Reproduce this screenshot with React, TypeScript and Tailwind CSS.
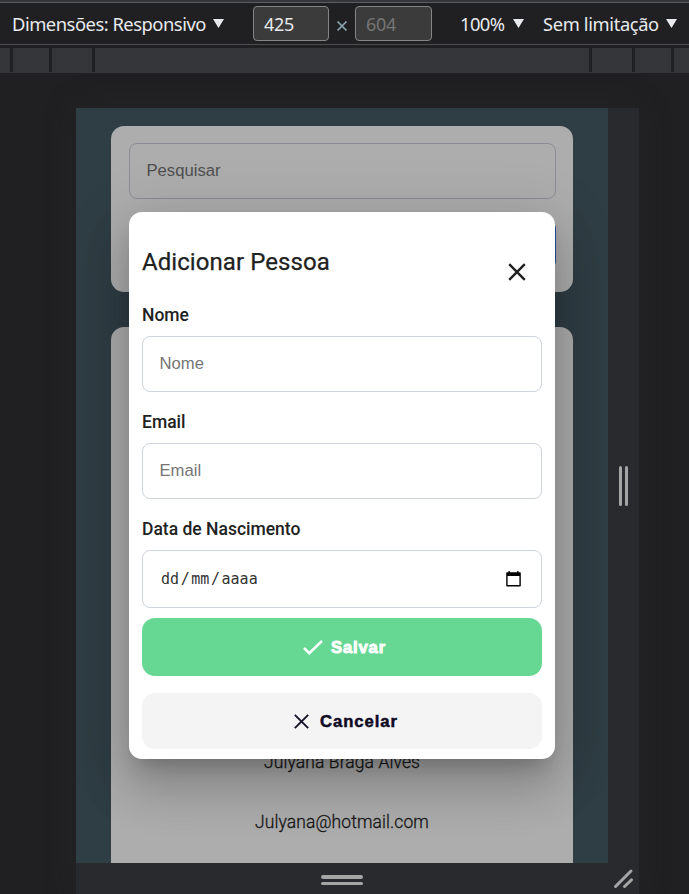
import type { ReactNode } from "react";

function Caret() {
  return (
    <svg className="-mt-px h-[9px] w-[11px] shrink-0" viewBox="0 0 11 9">
      <path d="M0 0h11L5.500 9z" fill="#e8eaed" />
    </svg>
  );
}

function Toolbar() {
  return (
    <>
      <div className="h-[3px] border-b border-[#5c5d60] bg-[#35363a]" />
      <header className="flex h-[42px] items-center border-b border-[#4c4d51] pl-3 text-[18px] whitespace-nowrap text-[#e8eaed]">
        <span className="w-[201px] shrink-0 text-[18.4px] tracking-[-0.5px]">Dimensões: Responsivo</span>
        <Caret />
        <div className="ml-[29px] flex h-[35px] w-[76px] shrink-0 items-center rounded-[4px] border border-[#858585] bg-[#3b3b3b] pt-[2px] pl-[10px] tracking-[-0.3px]">425</div>
        <svg className="mx-[7px] mt-[5px] h-3 w-3 shrink-0" viewBox="0 0 12 12">
          <path d="M1.500 1.500l9 9M10.500 1.500l-9 9" stroke="#8ca5b1" strokeWidth="1.700" />
        </svg>
        <div className="flex h-[35px] w-[77px] shrink-0 items-center rounded-[4px] border border-[#858585] bg-[#3b3b3b] pt-[2px] pl-[10px] tracking-[-0.3px] text-[#757575]">604</div>
        <span className="ml-7 w-[53px] shrink-0 text-[18.4px] tracking-[-0.6px]">100%</span>
        <Caret />
        <span className="ml-[19px] w-[123px] shrink-0 text-[18.3px] tracking-[-0.35px]">Sem limitação</span>
        <Caret />
      </header>
    </>
  );
}

function Ruler() {
  return (
    <div className="mt-[3px] flex h-[25px] gap-[3px] border-b border-[#35363a]">
      <i className="w-[10px] bg-[#35363a]" />
      <i className="w-[36px] bg-[#35363a]" />
      <i className="w-[40px] bg-[#35363a]" />
      <i className="w-[494px] bg-[#35363a]" />
      <i className="w-[40px] bg-[#35363a]" />
      <i className="w-[36px] bg-[#35363a]" />
      <i className="flex-1 bg-[#35363a]" />
    </div>
  );
}

function Field({ label, children }: { label: string; children: ReactNode }) {
  return (
    <label className="block">
      <span className="block h-[31px] text-[17.5px] leading-[20px] font-medium text-[#212121]">{label}</span>
      {children}
    </label>
  );
}

function Dialog() {
  return (
    <section className="absolute top-[104px] left-[53px] h-[547px] w-[426px] rounded-[13px] bg-white px-[13px] shadow-[0_14px_19px_-9px_rgba(0,0,0,0.2),0_30px_48px_4px_rgba(0,0,0,0.14),0_11px_58px_10px_rgba(0,0,0,0.12)]">
      <div className="flex h-[93px] justify-between pt-[34px] pr-[16px]">
        <h1 className="text-[24px] leading-8 tracking-[0.07px] text-[#212121] [-webkit-text-stroke:0.25px_#212121]">Adicionar Pessoa</h1>
        <svg className="mt-[17px] h-[18px] w-[18px]" viewBox="0 0 18 18">
          <path d="M1.200 1.200l15.600 15.600M16.800 1.200L1.200 16.800" stroke="#202020" strokeWidth="2.400" />
        </svg>
      </div>
      <Field label="Nome">
        <input placeholder="Nome" className="mb-5 block h-[56px] w-full rounded-[8px] border border-[#ced4da] px-[16.500px] font-['Liberation_Sans',sans-serif] text-[16.67px] placeholder:text-[#757575]" />
      </Field>
      <Field label="Email">
        <input placeholder="Email" className="mb-5 block h-[56px] w-full rounded-[8px] border border-[#ced4da] px-[16.500px] font-['Liberation_Sans',sans-serif] text-[16.67px] placeholder:text-[#757575]" />
      </Field>
      <Field label="Data de Nascimento">
        <div className="flex h-[58px] items-center justify-between rounded-[8px] border border-[#ced4da] pr-[20px] pl-[18px] font-['DejaVu_Sans_Mono',monospace] text-[15px] text-[#333]">
          <span className="flex items-center">
            <span>dd</span><span className="mx-[1.600px]">/</span><span>mm</span><span className="mx-[1.600px]">/</span><span>aaaa</span>
          </span>
          <svg className="h-[16px] w-[15px]" viewBox="0 0 15 16">
            <path d="M2.500 0h1.300v1.200h7.400V0h1.300v1.200H14q.8 0 .8.800v12.700q0 .8-.8.800H1q-.8 0-.8-.8V2q0-.8.8-.8h1.500zM1.600 5v9.100h11.800V5z" fill="#000" fillRule="evenodd" />
          </svg>
        </div>
      </Field>
      <button className="mt-[10px] flex h-[58px] w-full items-center justify-center gap-[8px] rounded-[13px] bg-[#66d893] pl-[5px] font-['Liberation_Sans',sans-serif] text-[16.67px] font-bold tracking-[0.85px] text-white [-webkit-text-stroke:0.9px_white]">
        <svg className="h-[15px] w-[20px]" viewBox="0 0 20 15">
          <path d="M1 8l5.300 5.200L19 1" fill="none" stroke="white" strokeWidth="2.500" />
        </svg>
        Salvar
      </button>
      <button className="mt-[17px] flex h-[56px] w-full items-center justify-center gap-[11px] rounded-[13px] bg-[#f4f4f4] pl-[8px] font-['Liberation_Sans',sans-serif] text-[16.67px] font-bold tracking-[0.95px] text-[#0f0a24] [-webkit-text-stroke:0.5px_#0f0a24]">
        <svg className="h-[15px] w-[15px]" viewBox="0 0 15 15">
          <path d="M.8.8l13.400 13.400M14.200.8L.8 14.200" stroke="#171229" strokeWidth="1.900" />
        </svg>
        Cancelar
      </button>
    </section>
  );
}

export default function App() {
  return (
    <main className="h-[894px] w-[689px] overflow-hidden bg-[#202022] font-['Noto_Sans',sans-serif]">
      <Toolbar />
      <Ruler />
      <div className="mt-[35px] ml-[76px] grid h-[786px] w-[563px] grid-cols-[532px_31px] grid-rows-[755px_31px] bg-[#292a2d] shadow-[0_0_30px_rgba(45,45,48,0.3)]">
        <div className="relative overflow-hidden bg-[#2f3d44] px-[35px] pt-[18px] font-[Roboto,sans-serif]">
          <div className="h-[166px] rounded-[13px] bg-[#adadad] pt-[17px] pr-[17px] pl-[18px]">
            <div className="flex h-[56px] items-center rounded-[8px] border border-[#8c8d94] px-[16.500px] pb-[2px] font-['Liberation_Sans',sans-serif] text-[16.67px] text-[#4f4f4f]">Pesquisar</div>
            <div className="mt-[22px] h-[48px] rounded-[8px] bg-[#244e9b]" />
          </div>
          <div className="mt-[35px] h-[600px] rounded-t-[13px] bg-[#adadad] px-[18px] pt-[420px] text-center text-[17.5px] font-light tracking-[0.1px] text-[#171717] [-webkit-text-stroke:0.3px_#171717]">
            <p className="leading-[30px]">Julyana Braga Alves</p>
            <p className="mt-[30px] leading-[30px]">Julyana@hotmail.com</p>
          </div>
          <Dialog />
        </div>
        <div className="flex items-center justify-center gap-[3px]">
          <i className="h-[40px] w-[3px] rounded-full bg-[#a5a5a5]" />
          <i className="h-[40px] w-[3px] rounded-full bg-[#a5a5a5]" />
        </div>
        <div className="flex flex-col items-center justify-center gap-[3px] pt-[3px]">
          <i className="h-[4px] w-[42px] rounded-full bg-[#a5a5a5]" />
          <i className="h-[3px] w-[42px] rounded-full bg-[#a5a5a5]" />
        </div>
        <svg className="h-[31px] w-[31px]" viewBox="0 0 31 31">
          <path d="M7.500 23.500L23 8M16.500 23.500L23.500 16.800" stroke="#a5a5a5" strokeWidth="3" strokeLinecap="round" />
        </svg>
      </div>
    </main>
  );
}
